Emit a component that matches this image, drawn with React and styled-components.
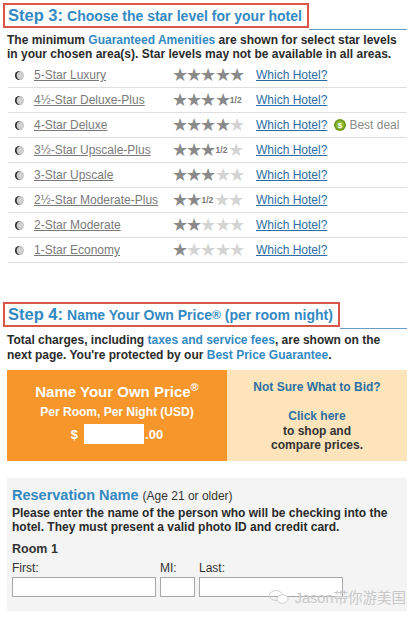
import styled, {createGlobalStyle} from "styled-components";

const GlobalStyle = createGlobalStyle`
  body {
    margin: 0;
    background: #fff;
    font-family: "Liberation Sans", Arial, sans-serif;
    font-size: 12px;
    color: #333;
  }
`;

const Page = styled.div`
  width: 418px;
  height: 622px;
  padding: 3px 11px 0 3px;
  box-sizing: border-box;
  position: relative;
  overflow: hidden;
`;

const StepHeader = styled.div`
  display: flex;
  align-items: flex-end;
  margin-top: ${p => p.$top || 0}px;
`;

const StepBox = styled.div`
  border: 2px solid #d9574a;
  height: 21px;
  padding: 0 5px 0 3px;
  display: flex;
  align-items: center;
  color: #3389c2;
  font-weight: bold;
  font-size: 14px;
  white-space: nowrap;

  b {
    font-size: 16.5px;
    margin-right: 4px;
  }

  sup {
    font-size: 12px;
    line-height: 0;
    vertical-align: 5px;
  }
`;

const StepLine = styled.div`
  flex: 1;
  border-bottom: 1px solid #6a9cc4;
  margin-bottom: -2px;
`;

const Intro = styled.p`
  margin: 5px 0 0 4px;
  font-weight: bold;
  font-size: 12px;
  line-height: 14px;
  color: #2b2b2b;

  span {
    color: #3389c2;
  }
`;

const StarList = styled.div`
  margin: 2px 0 0 5px;
`;

const StarRow = styled.div`
  display: grid;
  grid-template-columns: 26px 138px 84px auto;
  align-items: center;
  height: 24px;
  border-bottom: 1px solid #dedede;
`;

const Radio = styled.span`
  width: 9px;
  height: 9px;
  margin-left: 7px;
  border-radius: 50%;
  background: radial-gradient(circle at 60% 50%, #d8d8d8, #b5b5b5);
  box-shadow: inset 1.5px 0 0 #222;
`;

const LevelLink = styled.a`
  color: #7a7a7a;
  text-decoration: underline;
  font-size: 12px;
`;

const Stars = styled.span`
  display: flex;
  align-items: center;
  font-size: 18px;
  letter-spacing: -1.8px;
  line-height: 1;
`;

const Star = styled.span`
  color: ${p => (p.$on ? "#8a8a8a" : "#d4d4d4")};
`;

const Half = styled.span`
  font-size: 8.5px;
  font-weight: bold;
  color: #777;
  letter-spacing: 0;
  margin: 0 1px;
`;

const LinkCell = styled.span`
  display: flex;
  align-items: center;
  gap: 7px;
`;

const HotelLink = styled.a`
  color: #2e6da4;
  text-decoration: underline;
  font-size: 12px;
`;

const Deal = styled.span`
  display: flex;
  align-items: center;
  gap: 3px;
  color: #8a8a8a;
  font-size: 12px;
`;

const Note = styled.p`
  margin: 6px 0 0 4px;
  font-weight: bold;
  font-size: 12px;
  line-height: 15px;
  color: #2b2b2b;

  span {
    color: #3389c2;
  }
`;

const PricePanel = styled.div`
  display: grid;
  grid-template-columns: 220px 180px;
  margin: 7px 0 0 4px;
  height: 91px;
`;

const OrangeCell = styled.div`
  background: #f7962b;
  color: #fff;
  font-weight: bold;
  display: flex;
  flex-direction: column;
  align-items: center;
  padding-top: 13px;
  box-sizing: border-box;

  h3 {
    margin: 0;
    font-size: 15px;
    line-height: 18px;
  }

  sup {
    font-size: 11px;
    line-height: 0;
    vertical-align: 6px;
  }
`;

const SubLine = styled.div`
  font-size: 12px;
  margin-top: 4px;
`;

const BidRow = styled.div`
  display: flex;
  align-items: center;
  gap: 6px;
  font-size: 13px;
  margin-top: 5px;
`;

const BidInput = styled.div`
  width: 60px;
  height: 20px;
  background: #fff;
  margin-right: -5px;
`;

const PeachCell = styled.div`
  background: #fde4bb;
  text-align: center;
  font-weight: bold;
  font-size: 12px;
  line-height: 14.5px;
  color: #333;
  padding-top: 10px;

  a {
    color: #2d70a3;
    display: block;
  }
`;

const Reservation = styled.div`
  margin: 17px 0 0 4px;
  background: #f4f4f4;
  height: 133px;
  padding: 9px 5px 0 5px;
  box-sizing: border-box;
`;

const ResTitle = styled.div`
  color: #3389c2;
  font-weight: bold;
  font-size: 14.5px;

  span {
    font-weight: normal;
    color: #333;
    font-size: 12px;
  }
`;

const ResText = styled.p`
  margin: 3px 0 0;
  font-weight: bold;
  font-size: 12px;
  line-height: 14px;
  color: #2b2b2b;
`;

const RoomLabel = styled.div`
  font-weight: bold;
  font-size: 12.5px;
  margin-top: 8px;
`;

const Fields = styled.div`
  display: flex;
  gap: 4px;
  margin-top: 6px;
`;

const Field = styled.label`
  display: flex;
  flex-direction: column;
  font-size: 12px;
  color: #333;
  line-height: 13px;
`;

const TextBox = styled.div`
  width: ${p => p.$w}px;
  height: 20px;
  margin-top: 2px;
  background: #fff;
  border: 1px solid #a8a8a8;
  box-sizing: border-box;
`;

const Watermark = styled.div`
  position: absolute;
  right: 12px;
  bottom: 15px;
  display: flex;
  align-items: center;
  gap: 5px;
  color: #c8c8c8;
  font-size: 14.5px;
  font-family: "Liberation Sans", "Noto Sans CJK SC", sans-serif;
`;

const levels = [
  {name: "5-Star Luxury", stars: 5},
  {name: "4½-Star Deluxe-Plus", stars: 4.5},
  {name: "4-Star Deluxe", stars: 4, deal: true},
  {name: "3½-Star Upscale-Plus", stars: 3.5},
  {name: "3-Star Upscale", stars: 3},
  {name: "2½-Star Moderate-Plus", stars: 2.5},
  {name: "2-Star Moderate", stars: 2},
  {name: "1-Star Economy", stars: 1},
];

function StarRating({count}) {
  const full = Math.floor(count);
  const half = count % 1 !== 0;
  // always shows 5 slots, the half replaces one empty star with "1/2"
  const items = [];
  for (let i = 0; i < full; i++) items.push(<Star key={"f" + i} $on>★</Star>);
  if (half) items.push(<Half key="h">1/2</Half>);
  const empty = 5 - full - (half ? 1 : 0);
  for (let i = 0; i < empty; i++) items.push(<Star key={"e" + i}>★</Star>);
  return <Stars>{items}</Stars>;
}

function DealIcon() {
  return (
    <svg width="12" height="12" viewBox="0 0 12 12">
      <circle cx="6" cy="6" r="6" fill="#6f9a1c"/>
      <circle cx="6" cy="6" r="4.3" fill="#8cb82d"/>
      <text x="6" y="9" textAnchor="middle" fontSize="8" fontWeight="bold" fill="#fff"
            fontFamily="Liberation Sans, sans-serif">$</text>
    </svg>
  );
}

function WeChatIcon() {
  return (
    <svg width="22" height="16" viewBox="0 0 22 16" fill="none" stroke="#d0d0d0" strokeWidth="1">
      <ellipse cx="8" cy="6.5" rx="6.5" ry="5"/>
      <ellipse cx="14.5" cy="10" rx="5.5" ry="4.3" fill="#fff"/>
    </svg>
  );
}

export default function App() {
  return (
    <Page>
      <GlobalStyle/>
      <StepHeader>
        <StepBox><b>Step 3:</b>Choose the star level for your hotel</StepBox>
        <StepLine/>
      </StepHeader>
      <Intro>
        The minimum <span>Guaranteed Amenities</span> are shown for select star levels
        in your chosen area(s). Star levels may not be available in all areas.
      </Intro>

      <StarList>
        {levels.map(l => (
          <StarRow key={l.name}>
            <Radio/>
            <LevelLink>{l.name}</LevelLink>
            <StarRating count={l.stars}/>
            <LinkCell>
              <HotelLink>Which Hotel?</HotelLink>
              {l.deal && (
                <Deal><DealIcon/>Best deal</Deal>
              )}
            </LinkCell>
          </StarRow>
        ))}
      </StarList>

      <StepHeader $top={39}>
        <StepBox><b>Step 4:</b>Name Your Own Price<sup>®</sup>&nbsp;(per room night)</StepBox>
        <StepLine/>
      </StepHeader>
      <Note>
        Total charges, including <span>taxes and service fees</span>, are shown on the
        next page. You're protected by our <span>Best Price Guarantee</span>.
      </Note>

      <PricePanel>
        <OrangeCell>
          <h3>Name Your Own Price<sup>®</sup></h3>
          <SubLine>Per Room, Per Night (USD)</SubLine>
          <BidRow>$ <BidInput/>.00</BidRow>
        </OrangeCell>
        <PeachCell>
          <a>Not Sure What to Bid?</a>
          <br/>
          <a>Click here</a>
          to shop and<br/>compare prices.
        </PeachCell>
      </PricePanel>

      <Reservation>
        <ResTitle>Reservation Name <span>(Age 21 or older)</span></ResTitle>
        <ResText>
          Please enter the name of the person who will be checking into the
          hotel. They must present a valid photo ID and credit card.
        </ResText>
        <RoomLabel>Room 1</RoomLabel>
        <Fields>
          <Field>First:<TextBox $w={144}/></Field>
          <Field>MI:<TextBox $w={35}/></Field>
          <Field>Last:<TextBox $w={144}/></Field>
        </Fields>
      </Reservation>

      <Watermark><WeChatIcon/>Jason带你游美国</Watermark>
    </Page>
  );
}
